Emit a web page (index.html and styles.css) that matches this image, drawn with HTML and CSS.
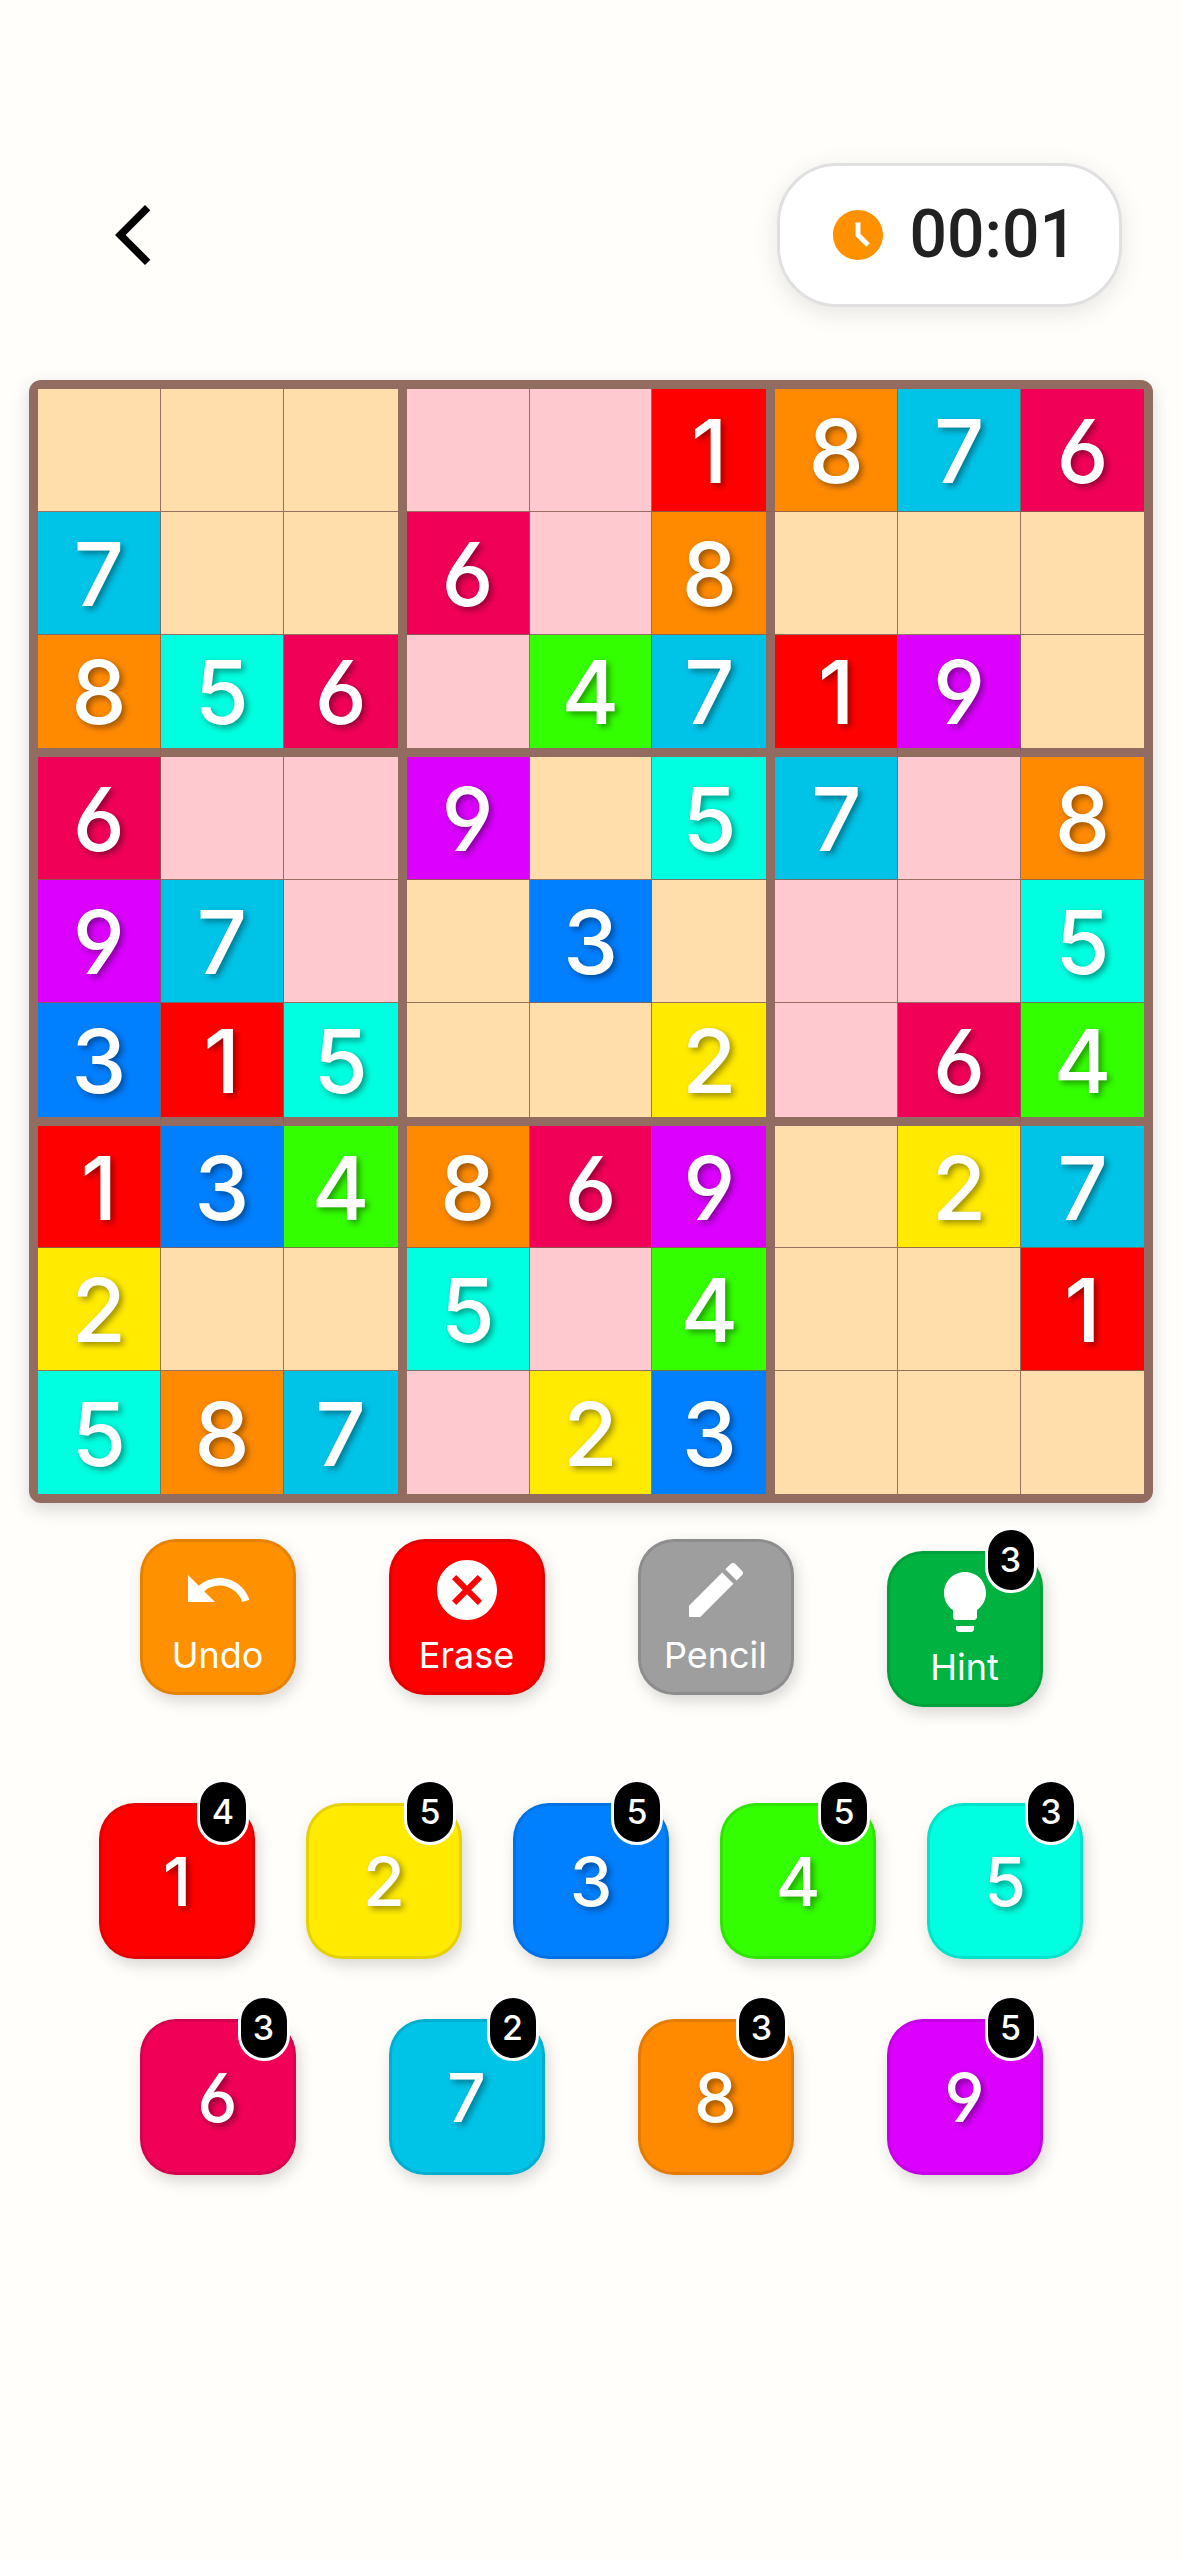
FILE: index.html
```html
<!DOCTYPE html>
<html lang="en">
<head>
  <meta charset="utf-8">
  <meta name="viewport" content="width=device-width, initial-scale=1">
  <title>Color Sudoku</title>
  <link rel="stylesheet" href="styles.css">
</head>
<body>
  <header class="topbar">
    <button class="back" aria-label="Back">
      <svg class="icon" viewBox="0 0 24 24"><path d="M17.77 3.77 16 2 6 12l10 10 1.77-1.77L9.54 12z"/></svg>
    </button>
    <div class="timer">
      <svg class="timer-icon" viewBox="0 0 24 24"><path d="M11.99 2C6.47 2 2 6.48 2 12s4.47 10 9.99 10C17.52 22 22 17.52 22 12S17.52 2 11.99 2zm3.3 14.71L11 12.41V7h2v4.59l3.71 3.71-1.42 1.41z"/></svg>
      <time>00:01</time>
    </div>
  </header>

  <main>
    <section class="board" aria-label="Board">
      <div class="row">
        <button class="cell" aria-label="Empty"></button>
        <button class="cell" aria-label="Empty"></button>
        <button class="cell" aria-label="Empty"></button>
        <button class="cell" aria-label="Empty"></button>
        <button class="cell" aria-label="Empty"></button>
        <button class="cell n1">1</button>
        <button class="cell n8">8</button>
        <button class="cell n7">7</button>
        <button class="cell n6">6</button>
      </div>
      <div class="row">
        <button class="cell n7">7</button>
        <button class="cell" aria-label="Empty"></button>
        <button class="cell" aria-label="Empty"></button>
        <button class="cell n6">6</button>
        <button class="cell" aria-label="Empty"></button>
        <button class="cell n8">8</button>
        <button class="cell" aria-label="Empty"></button>
        <button class="cell" aria-label="Empty"></button>
        <button class="cell" aria-label="Empty"></button>
      </div>
      <div class="row">
        <button class="cell n8">8</button>
        <button class="cell n5">5</button>
        <button class="cell n6">6</button>
        <button class="cell" aria-label="Empty"></button>
        <button class="cell n4">4</button>
        <button class="cell n7">7</button>
        <button class="cell n1">1</button>
        <button class="cell n9">9</button>
        <button class="cell" aria-label="Empty"></button>
      </div>
      <div class="row">
        <button class="cell n6">6</button>
        <button class="cell" aria-label="Empty"></button>
        <button class="cell" aria-label="Empty"></button>
        <button class="cell n9">9</button>
        <button class="cell" aria-label="Empty"></button>
        <button class="cell n5">5</button>
        <button class="cell n7">7</button>
        <button class="cell" aria-label="Empty"></button>
        <button class="cell n8">8</button>
      </div>
      <div class="row">
        <button class="cell n9">9</button>
        <button class="cell n7">7</button>
        <button class="cell" aria-label="Empty"></button>
        <button class="cell" aria-label="Empty"></button>
        <button class="cell n3">3</button>
        <button class="cell" aria-label="Empty"></button>
        <button class="cell" aria-label="Empty"></button>
        <button class="cell" aria-label="Empty"></button>
        <button class="cell n5">5</button>
      </div>
      <div class="row">
        <button class="cell n3">3</button>
        <button class="cell n1">1</button>
        <button class="cell n5">5</button>
        <button class="cell" aria-label="Empty"></button>
        <button class="cell" aria-label="Empty"></button>
        <button class="cell n2">2</button>
        <button class="cell" aria-label="Empty"></button>
        <button class="cell n6">6</button>
        <button class="cell n4">4</button>
      </div>
      <div class="row">
        <button class="cell n1">1</button>
        <button class="cell n3">3</button>
        <button class="cell n4">4</button>
        <button class="cell n8">8</button>
        <button class="cell n6">6</button>
        <button class="cell n9">9</button>
        <button class="cell" aria-label="Empty"></button>
        <button class="cell n2">2</button>
        <button class="cell n7">7</button>
      </div>
      <div class="row">
        <button class="cell n2">2</button>
        <button class="cell" aria-label="Empty"></button>
        <button class="cell" aria-label="Empty"></button>
        <button class="cell n5">5</button>
        <button class="cell" aria-label="Empty"></button>
        <button class="cell n4">4</button>
        <button class="cell" aria-label="Empty"></button>
        <button class="cell" aria-label="Empty"></button>
        <button class="cell n1">1</button>
      </div>
      <div class="row">
        <button class="cell n5">5</button>
        <button class="cell n8">8</button>
        <button class="cell n7">7</button>
        <button class="cell" aria-label="Empty"></button>
        <button class="cell n2">2</button>
        <button class="cell n3">3</button>
        <button class="cell" aria-label="Empty"></button>
        <button class="cell" aria-label="Empty"></button>
        <button class="cell" aria-label="Empty"></button>
      </div>
    </section>

    <section class="keys tools" aria-label="Tools">
      <button class="key tool undo">
        <svg class="icon" viewBox="0 0 24 24"><path d="M12.5 8c-2.65 0-5.05.99-6.9 2.6L2 7v9h9l-3.62-3.62c1.39-1.16 3.16-1.88 5.12-1.88 3.54 0 6.55 2.31 7.6 5.5l2.37-.78C21.08 11.03 17.15 8 12.5 8z"/></svg>
        Undo
      </button>
      <button class="key tool erase">
        <svg class="icon" viewBox="0 0 24 24"><path d="M12 2C6.47 2 2 6.47 2 12s4.47 10 10 10 10-4.47 10-10S17.53 2 12 2zm5 13.59L15.59 17 12 13.41 8.41 17 7 15.59 10.59 12 7 8.41 8.41 7 12 10.59 15.59 7 17 8.41 13.41 12 17 15.59z"/></svg>
        Erase
      </button>
      <button class="key tool pencil">
        <svg class="icon" viewBox="0 0 24 24"><path d="M3 17.25V21h3.75L17.81 9.94l-3.75-3.75L3 17.25zM20.71 7.04c.39-.39.39-1.02 0-1.41l-2.34-2.34c-.39-.39-1.02-.39-1.41 0l-1.83 1.83 3.75 3.75 1.83-1.83z"/></svg>
        Pencil
      </button>
      <button class="key tool hint">
        <svg class="icon" viewBox="0 0 24 24"><path d="M9 21c0 .5.4 1 1 1h4c.6 0 1-.5 1-1v-1H9v1zm3-19C8.1 2 5 5.1 5 9c0 2.4 1.2 4.5 3 5.7V17c0 .5.4 1 1 1h6c.6 0 1-.5 1-1v-2.3c1.8-1.3 3-3.4 3-5.7 0-3.9-3.1-7-7-7z"/></svg>
        Hint
        <span class="badge">3</span>
      </button>
    </section>

    <section class="pad" aria-label="Numbers">
      <div class="keys five">
        <button class="key n1">1<span class="badge">4</span></button>
        <button class="key n2">2<span class="badge">5</span></button>
        <button class="key n3">3<span class="badge">5</span></button>
        <button class="key n4">4<span class="badge">5</span></button>
        <button class="key n5">5<span class="badge">3</span></button>
      </div>
      <div class="keys">
        <button class="key n6">6<span class="badge">3</span></button>
        <button class="key n7">7<span class="badge">2</span></button>
        <button class="key n8">8<span class="badge">3</span></button>
        <button class="key n9">9<span class="badge">5</span></button>
      </div>
    </section>
  </main>
</body>
</html>
```
FILE: styles.css
```css
* {
  box-sizing: border-box;
}

body {
  margin: 0;
  min-height: 100vh;
  background: #fffefa;
  font-family: Inter, "Open Sans", sans-serif;
  font-feature-settings: "cv03", "cv04";
}

button {
  margin: 0;
  padding: 0;
  border: 0;
  background: none;
  color: inherit;
  font: inherit;
  font-feature-settings: inherit;
  cursor: pointer;
}

.icon {
  display: block;
  width: 72px;
  height: 72px;
  fill: currentColor;
}

/* Digit colours, shared by the board and the number pad */

.n1 { --fill: #ff0000; }
.n2 { --fill: #ffea00; }
.n3 { --fill: #007fff; }
.n4 { --fill: #33ff00; }
.n5 { --fill: #00ffe0; }
.n6 { --fill: #f00057; }
.n7 { --fill: #00c3e8; }
.n8 { --fill: #ff8a00; }
.n9 { --fill: #dc00ff; }

/* Top bar */

.topbar {
  display: flex;
  align-items: center;
  justify-content: space-between;
  padding: 163px 60px 0 97px;
}

.back {
  color: #000;
}

.timer {
  display: flex;
  align-items: center;
  gap: 22px;
  height: 144px;
  padding: 0 42px 0 48px;
  border: 3px solid #e0e0e0;
  border-radius: 60px;
  background: #fff;
  box-shadow: 0 6px 24px rgba(0, 0, 0, 0.1);
  color: #212121;
  font: 500 66px/80px Roboto, sans-serif;
}

.timer-icon {
  width: 60px;
  height: 60px;
  fill: #ff9100;
}

/* Board */

.board {
  display: grid;
  grid-template-rows: repeat(9, 1fr);
  aspect-ratio: 1124 / 1123;
  margin: 73px 29px 0;
  border: 9px solid #926c61;
  border-radius: 12px;
  background: #926c61;
  box-shadow: 0 6px 18px rgba(0, 0, 0, 0.16);
}

.row {
  display: grid;
  grid-template-columns: repeat(9, 1fr);
  min-height: 0;
}

.cell {
  --empty: #ffdeac;
  padding-top: 2px;
  border: 0 solid rgba(134, 94, 80, 0.85);
  border-width: 0 1px 1px 0;
  background-color: var(--fill, var(--empty));
  color: #fff;
  font-size: 88px;
  font-weight: 500;
  line-height: 96px;
  text-shadow: 3px 3px 6px rgba(0, 0, 0, 0.4);
}

.row:nth-child(-n+3) .cell:nth-child(n+4):nth-child(-n+6),
.row:nth-child(n+7) .cell:nth-child(n+4):nth-child(-n+6),
.row:nth-child(n+4):nth-child(-n+6) .cell:nth-child(-n+3),
.row:nth-child(n+4):nth-child(-n+6) .cell:nth-child(n+7) {
  --empty: #ffc9d0;
}

.cell:nth-child(3),
.cell:nth-child(6) {
  border-right: 9px solid #926c61;
}

.row:nth-child(3) .cell,
.row:nth-child(6) .cell {
  border-bottom: 9px solid #926c61;
}

.cell:last-child {
  border-right: 0;
}

.row:last-child .cell {
  border-bottom: 0;
}

/* Keys */

.keys {
  display: flex;
  justify-content: center;
  align-items: flex-start;
  gap: 93px;
}

.five {
  gap: 51px;
}

.tools {
  margin-top: 36px;
}

.pad {
  display: grid;
  gap: 60px;
  margin-top: 96px;
  padding-bottom: 96px;
}

.key {
  position: relative;
  width: 156px;
  height: 156px;
  border: 3px solid rgba(0, 0, 0, 0.1);
  border-radius: 36px;
  background-color: var(--fill);
  box-shadow: 3px 6px 15px rgba(0, 0, 0, 0.16);
  color: #fff;
  font-size: 68px;
  font-weight: 500;
  line-height: 80px;
  text-shadow: 3px 3px 6px rgba(0, 0, 0, 0.4);
}

.tool {
  display: flex;
  flex-direction: column;
  align-items: center;
  justify-content: center;
  gap: 4px;
  font-size: 36px;
  font-weight: 400;
  line-height: 50px;
  text-shadow: none;
}

.undo { --fill: #ff9100; }
.erase { --fill: #ff0000; }
.pencil { --fill: #9e9e9e; }

.hint {
  --fill: #00b341;
  margin-top: 12px;
}

.badge {
  position: absolute;
  top: -27px;
  right: 3px;
  width: 52px;
  height: 66px;
  border: 3px solid #fff;
  border-radius: 26px;
  background: #000;
  font-size: 34px;
  font-weight: 500;
  line-height: 60px;
  text-align: center;
  text-shadow: none;
}
```
